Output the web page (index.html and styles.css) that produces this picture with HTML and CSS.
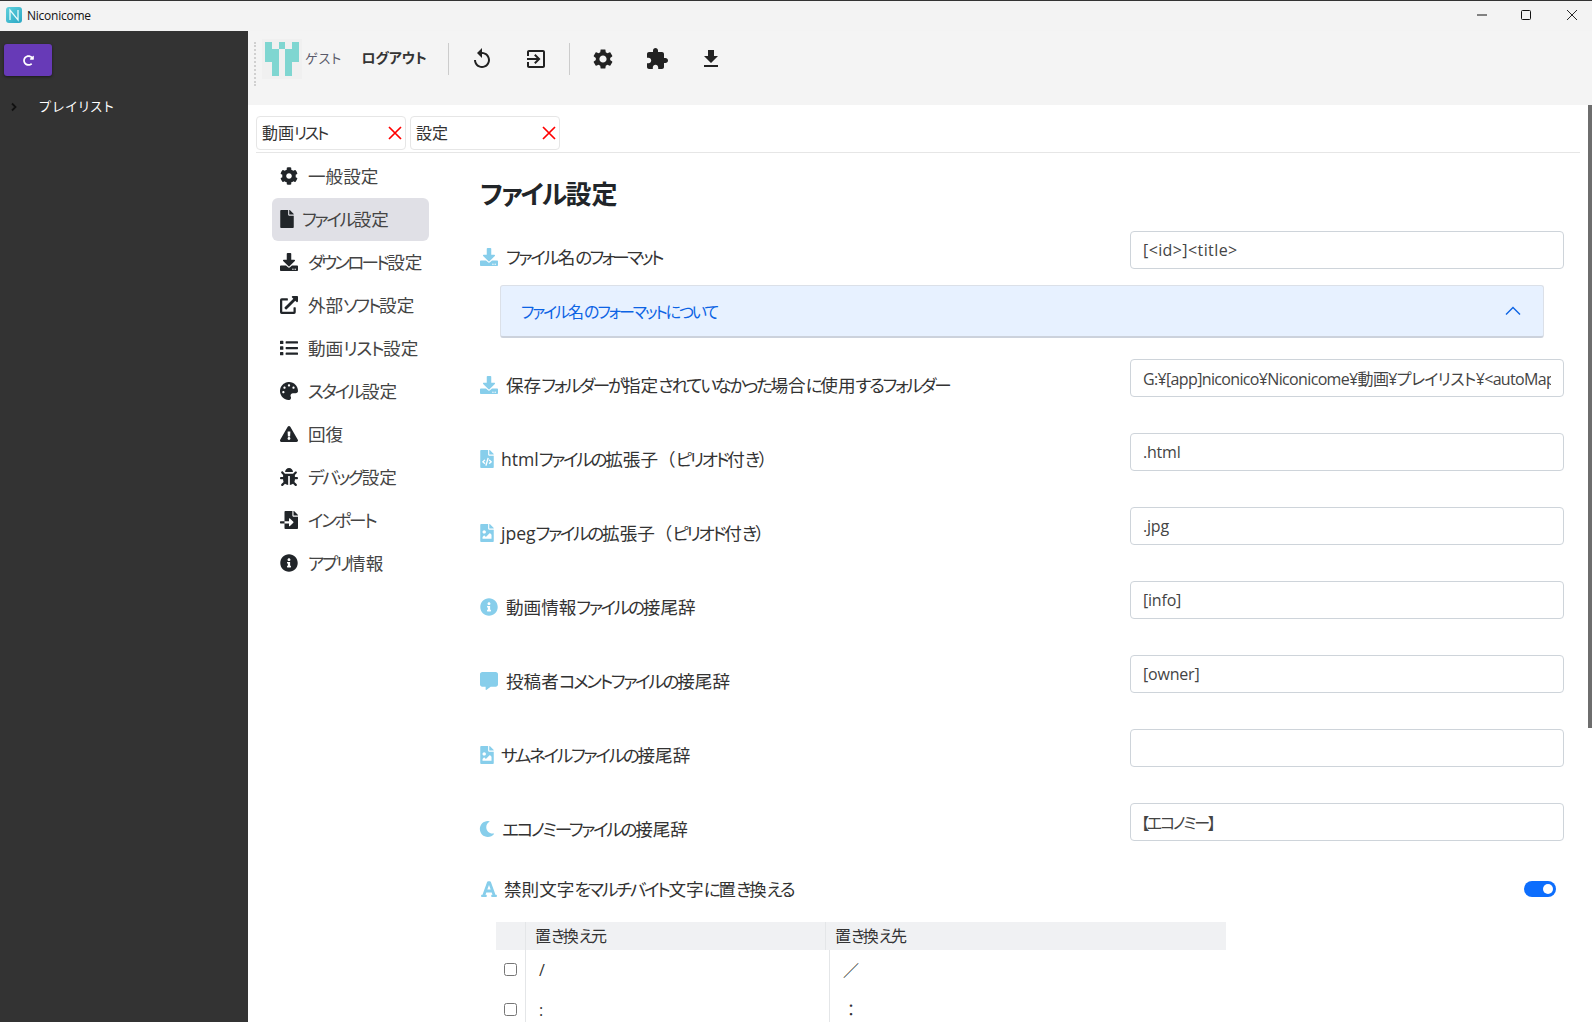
FILE: index.html
```html
<!DOCTYPE html>
<html lang="ja">
<head>
<meta charset="utf-8">
<title>Niconicome</title>
<link rel="stylesheet" href="styles.css">
</head>
<body>
<svg class="defs" aria-hidden="true">
  <symbol id="i-cog" viewBox="0 0 512 512"><path d="M487.4 315.7l-42.6-24.6c4.3-23.2 4.3-47 0-70.2l42.6-24.6c4.9-2.8 7.1-8.6 5.5-14-11.1-35.6-30-67.8-54.7-94.6-3.8-4.1-10-5.1-14.8-2.3L380.8 110c-17.9-15.4-38.5-27.3-60.8-35.1V25.8c0-5.6-3.9-10.5-9.4-11.7-36.7-8.2-74.3-7.8-109.2 0-5.5 1.2-9.4 6.1-9.4 11.7V75c-22.2 7.9-42.8 19.8-60.8 35.1L88.7 85.5c-4.9-2.8-11-1.9-14.8 2.3-24.7 26.7-43.6 58.9-54.7 94.6-1.7 5.4.6 11.2 5.5 14L67.3 221c-4.3 23.2-4.3 47 0 70.2l-42.6 24.6c-4.9 2.8-7.1 8.6-5.5 14 11.1 35.6 30 67.8 54.7 94.6 3.8 4.1 10 5.1 14.8 2.3l42.6-24.6c17.9 15.4 38.5 27.3 60.8 35.1v49.2c0 5.6 3.9 10.5 9.4 11.7 36.7 8.2 74.3 7.8 109.2 0 5.5-1.2 9.4-6.1 9.4-11.7v-49.2c22.2-7.9 42.8-19.8 60.8-35.1l42.6 24.6c4.9 2.8 11 1.9 14.8-2.3 24.7-26.7 43.6-58.9 54.7-94.6 1.5-5.5-.7-11.3-5.6-14.1zM256 336c-44.1 0-80-35.9-80-80s35.9-80 80-80 80 35.9 80 80-35.9 80-80 80z"/></symbol>
  <symbol id="i-download" viewBox="0 0 512 512"><path d="M216 0h80c13.3 0 24 10.7 24 24v168h87.7c17.8 0 26.7 21.5 14.1 34.1L269.7 378.3c-7.5 7.5-19.8 7.5-27.3 0L90.1 226.1c-12.6-12.6-3.7-34.1 14.1-34.1H192V24c0-13.3 10.7-24 24-24zm296 376v112c0 13.3-10.7 24-24 24H24c-13.3 0-24-10.7-24-24V376c0-13.3 10.7-24 24-24h146.7l49 49c20.1 20.1 52.5 20.1 72.6 0l49-49H488c13.3 0 24 10.7 24 24zm-124 88c0-11-9-20-20-20s-20 9-20 20 9 20 20 20 20-9 20-20zm64 0c0-11-9-20-20-20s-20 9-20 20 9 20 20 20 20-9 20-20z"/></symbol>
  <symbol id="i-file" viewBox="0 0 384 512"><path d="M224 136V0H24C10.7 0 0 10.7 0 24v464c0 13.3 10.7 24 24 24h336c13.3 0 24-10.7 24-24V160H248c-13.2 0-24-10.8-24-24zm160-14.1v6.1H256V0h6.1c6.4 0 12.5 2.5 17 7l97.9 98c4.5 4.5 7 10.6 7 16.9z"/></symbol>
  <symbol id="i-info" viewBox="0 0 512 512"><path d="M256 8C119 8 8 119.1 8 256c0 137 111 248 248 248s248-111 248-248C504 119.1 393 8 256 8zm0 110c23.2 0 42 18.8 42 42s-18.8 42-42 42-42-18.8-42-42 18.8-42 42-42zm56 254c0 6.6-5.4 12-12 12h-88c-6.6 0-12-5.4-12-12v-24c0-6.6 5.4-12 12-12h12v-64h-12c-6.6 0-12-5.4-12-12v-24c0-6.6 5.4-12 12-12h64c6.6 0 12 5.4 12 12v100h12c6.6 0 12 5.4 12 12v24z"/></symbol>
  <symbol id="i-warn" viewBox="0 0 576 512"><path d="M569.5 440C588 472 564.8 512 527.9 512H48.1c-36.9 0-60-40-41.6-72L246.4 24c18.5-32 64.7-32 83.2 0l239.9 416zM288 354c-25.4 0-46 20.6-46 46s20.6 46 46 46 46-20.6 46-46-20.6-46-46-46zm-43.7-165.3l7.4 136c.3 6.4 5.6 11.3 12 11.3h48.5c6.4 0 11.6-5 12-11.3l7.4-136c.4-6.9-5.1-12.7-12-12.7h-63.4c-6.9 0-12.4 5.8-12 12.7z"/></symbol>
  <symbol id="i-palette" viewBox="0 0 512 512"><path d="M204.3 5C104.9 24.4 24.8 104.3 5.2 203.4c-37 187 131.7 326.4 258.8 306.7 41.2-6.4 61.4-54.6 42.5-91.7-23.1-45.4 9.9-98.4 60.9-98.4h79.7c35.8 0 64.8-29.6 64.9-65.3C511.5 97.1 368.1-26.9 204.3 5zM96 320c-17.7 0-32-14.3-32-32s14.3-32 32-32 32 14.3 32 32-14.3 32-32 32zm32-128c-17.7 0-32-14.3-32-32s14.3-32 32-32 32 14.3 32 32-14.3 32-32 32zm128-64c-17.7 0-32-14.3-32-32s14.3-32 32-32 32 14.3 32 32-14.3 32-32 32zm128 64c-17.7 0-32-14.3-32-32s14.3-32 32-32 32 14.3 32 32-14.3 32-32 32z"/></symbol>
  <symbol id="i-list" viewBox="0 0 512 512"><path d="M80 368H16a16 16 0 0 0-16 16v64a16 16 0 0 0 16 16h64a16 16 0 0 0 16-16v-64a16 16 0 0 0-16-16zm0-320H16A16 16 0 0 0 0 64v64a16 16 0 0 0 16 16h64a16 16 0 0 0 16-16V64a16 16 0 0 0-16-16zm0 160H16a16 16 0 0 0-16 16v64a16 16 0 0 0 16 16h64a16 16 0 0 0 16-16v-64a16 16 0 0 0-16-16zm416 176H176a16 16 0 0 0-16 16v32a16 16 0 0 0 16 16h320a16 16 0 0 0 16-16v-32a16 16 0 0 0-16-16zm0-320H176a16 16 0 0 0-16 16v32a16 16 0 0 0 16 16h320a16 16 0 0 0 16-16V80a16 16 0 0 0-16-16zm0 160H176a16 16 0 0 0-16 16v32a16 16 0 0 0 16 16h320a16 16 0 0 0 16-16v-32a16 16 0 0 0-16-16z"/></symbol>
  <symbol id="i-external" viewBox="0 0 512 512"><path d="M432 320H400a16 16 0 0 0-16 16V448H64V128H208a16 16 0 0 0 16-16V80a16 16 0 0 0-16-16H48A48 48 0 0 0 0 112V464a48 48 0 0 0 48 48H400a48 48 0 0 0 48-48V336A16 16 0 0 0 432 320ZM488 0h-128c-21.37 0-32.05 25.91-17 41l35.73 35.73L135 320.37a24 24 0 0 0 0 34L157.67 377a24 24 0 0 0 34 0L435.28 133.32 471 169c15 15 41 4.5 41-17V24A24 24 0 0 0 488 0Z"/></symbol>
  <symbol id="i-bug" viewBox="0 0 512 512"><path d="M511.988 288.9c-.478 17.43-15.217 31.1-32.653 31.1H424v16c0 21.864-4.882 42.584-13.6 61.145l60.228 60.228c12.496 12.497 12.496 32.758 0 45.255-12.498 12.497-32.759 12.496-45.256 0l-54.736-54.736C345.886 467.965 314.351 480 280 480V236c0-6.627-5.373-12-12-12h-24c-6.627 0-12 5.373-12 12v244c-34.351 0-65.886-12.035-90.636-32.108l-54.736 54.736c-12.498 12.497-32.759 12.496-45.256 0-12.496-12.497-12.496-32.758 0-45.255l60.228-60.228C92.882 378.584 88 357.864 88 336v-16H32.666C15.23 320 .491 306.33.013 288.9-.484 270.816 14.028 256 32 256h56v-58.745l-46.628-46.628c-12.496-12.497-12.496-32.758 0-45.255 12.498-12.497 32.758-12.497 45.256 0L141.255 160h229.489l54.627-54.627c12.498-12.497 32.758-12.497 45.256 0 12.496 12.497 12.496 32.758 0 45.255L424 197.255V256h56c17.972 0 32.484 14.816 31.988 32.9zM257 0c-61.856 0-112 50.144-112 112h224C369 50.144 318.856 0 257 0z"/></symbol>
  <symbol id="i-import" viewBox="0 0 512 512"><path d="M16 288c-8.8 0-16 7.2-16 16v32c0 8.8 7.2 16 16 16h112v-64zm489-183L407.1 7c-4.5-4.5-10.6-7-17-7H384v128h128v-6.1c0-6.3-2.5-12.4-7-16.9zm-153 31V0H152c-13.3 0-24 10.7-24 24v264h128v-65.2c0-14.3 17.3-21.4 27.4-11.3L379 308c6.6 6.7 6.6 17.4 0 24l-95.7 96.4c-10.1 10.1-27.4 3-27.4-11.3V352H128v136c0 13.3 10.7 24 24 24h336c13.3 0 24-10.7 24-24V160H376c-13.2 0-24-10.8-24-24z"/></symbol>
  <symbol id="i-fileimg" viewBox="0 0 384 512"><path d="M384 121.941V128H256V0h6.059a24 24 0 0 1 16.97 7.029l97.941 97.941a24.002 24.002 0 0 1 7.03 16.971zM248 160c-13.2 0-24-10.8-24-24V0H24C10.745 0 0 10.745 0 24v464c0 13.255 10.745 24 24 24h336c13.255 0 24-10.745 24-24V160H248zm-135.455 16c26.51 0 48 21.49 48 48s-21.49 48-48 48-48-21.49-48-48 21.491-48 48-48zm208 240h-256l.485-48.485L104.545 328c4.686-4.686 11.799-4.201 16.485.485L160.545 368 264.06 264.485c4.686-4.686 12.284-4.686 16.971 0L320.545 304v112z"/></symbol>
  <symbol id="i-filecode" viewBox="0 0 384 512"><path d="M384 121.941V128H256V0h6.059c6.365 0 12.47 2.529 16.971 7.029l97.941 97.941A24.005 24.005 0 0 1 384 121.941zM248 160c-13.2 0-24-10.8-24-24V0H24C10.745 0 0 10.745 0 24v464c0 13.255 10.745 24 24 24h336c13.255 0 24-10.745 24-24V160H248zM123.206 400.505a5.4 5.4 0 0 1-7.633.246l-64.866-60.812a5.4 5.4 0 0 1 0-7.879l64.866-60.812a5.4 5.4 0 0 1 7.633.246l19.579 20.885a5.4 5.4 0 0 1-.372 7.747L101.65 336l40.763 35.874a5.4 5.4 0 0 1 .372 7.747l-19.579 20.884zm51.295 50.479l-27.453-7.97a5.402 5.402 0 0 1-3.681-6.692l61.44-211.626a5.402 5.402 0 0 1 6.692-3.681l27.452 7.97a5.4 5.4 0 0 1 3.68 6.692l-61.44 211.626a5.397 5.397 0 0 1-6.69 3.681zm160.792-111.045l-64.866 60.812a5.4 5.4 0 0 1-7.633-.246l-19.58-20.885a5.4 5.4 0 0 1 .372-7.747L284.35 336l-40.763-35.874a5.4 5.4 0 0 1-.372-7.747l19.58-20.885a5.4 5.4 0 0 1 7.633-.246l64.866 60.812a5.4 5.4 0 0 1-.001 7.879z"/></symbol>
  <symbol id="i-comment" viewBox="0 0 512 512"><path d="M448 0H64C28.7 0 0 28.7 0 64v288c0 35.3 28.7 64 64 64h96v84c0 9.8 11.2 15.5 19.1 9.7L304 416h144c35.3 0 64-28.7 64-64V64c0-35.3-28.7-64-64-64z"/></symbol>
  <symbol id="i-moon" viewBox="0 0 512 512"><path d="M283.211 512c78.962 0 151.079-35.925 198.857-94.792 7.068-8.708-.639-21.43-11.562-19.35-124.203 23.654-238.262-71.576-238.262-196.954 0-72.222 38.662-138.635 101.498-174.394 9.686-5.512 7.25-20.197-3.756-22.23A258.156 258.156 0 0 0 283.211 0c-141.309 0-256 114.511-256 256 0 141.309 114.511 256 256 256z"/></symbol>
  <symbol id="i-font" viewBox="0 0 448 512"><path d="M432 416h-23.41L277.88 53.69A32 32 0 0 0 247.58 32h-47.16a32 32 0 0 0-30.3 21.69L39.41 416H16a16 16 0 0 0-16 16v32a16 16 0 0 0 16 16h128a16 16 0 0 0 16-16v-32a16 16 0 0 0-16-16h-19.6l23.3-64h152.6l23.3 64H304a16 16 0 0 0-16 16v32a16 16 0 0 0 16 16h128a16 16 0 0 0 16-16v-32a16 16 0 0 0-16-16zM176.85 272L224 142.51 271.15 272z"/></symbol>
  <symbol id="i-redo" viewBox="0 0 512 512"><path d="M256.455 8c66.269.119 126.437 26.233 170.859 68.685l35.715-35.715C478.149 25.851 504 36.559 504 57.941V192c0 13.255-10.745 24-24 24H345.941c-21.382 0-32.09-25.851-16.971-40.971l41.75-41.75c-30.864-28.899-70.801-44.907-113.23-45.273-92.398-.798-170.283 73.977-169.484 169.442C88.764 348.009 162.184 424 256 424c41.127 0 79.997-14.678 110.629-41.556 4.743-4.161 11.906-3.908 16.368.553l39.662 39.662c4.872 4.872 4.631 12.815-.482 17.433C378.202 479.813 319.926 504 256 504 119.034 504 8.001 392.967 8 256.002 7.999 119.193 119.646 7.755 256.455 8z"/></symbol>
  <symbol id="m-replay" viewBox="0 0 24 24"><path d="M12 5V1L7 6l5 5V7c3.31 0 6 2.69 6 6s-2.69 6-6 6-6-2.69-6-6H4c0 4.42 3.58 8 8 8s8-3.58 8-8-3.58-8-8-8z"/></symbol>
  <symbol id="m-exit" viewBox="0 0 24 24"><path d="M10.09 15.59L11.5 17l5-5-5-5-1.41 1.41L12.67 11H3v2h9.67l-2.58 2.59zM19 3H5c-1.11 0-2 .9-2 2v4h2V5h14v14H5v-4H3v4c0 1.1.89 2 2 2h14c1.1 0 2-.9 2-2V5c0-1.1-.9-2-2-2z"/></symbol>
  <symbol id="m-settings" viewBox="0 0 24 24"><path d="M19.14 12.94c.04-.3.06-.61.06-.94 0-.32-.02-.64-.07-.94l2.03-1.58c.18-.14.23-.41.12-.61l-1.92-3.32c-.12-.22-.37-.29-.59-.22l-2.39.96c-.5-.38-1.03-.7-1.62-.94l-.36-2.54c-.04-.24-.24-.41-.48-.41h-3.84c-.24 0-.43.17-.47.41l-.36 2.54c-.59.24-1.13.57-1.62.94l-2.39-.96c-.22-.08-.47 0-.59.22L2.74 8.87c-.12.21-.08.47.12.61l2.03 1.58c-.05.3-.09.63-.09.94s.02.64.07.94l-2.03 1.58c-.18.14-.23.41-.12.61l1.92 3.32c.12.22.37.29.59.22l2.39-.96c.5.38 1.03.7 1.62.94l.36 2.54c.05.24.24.41.48.41h3.84c.24 0 .44-.17.47-.41l.36-2.54c.59-.24 1.13-.56 1.62-.94l2.39.96c.22.08.47 0 .59-.22l1.92-3.32c.12-.22.07-.47-.12-.61l-2.01-1.58zM12 15.6c-1.98 0-3.6-1.62-3.6-3.6s1.62-3.6 3.6-3.6 3.6 1.62 3.6 3.6-1.62 3.6-3.6 3.6z"/></symbol>
  <symbol id="m-extension" viewBox="0 0 24 24"><path d="M20.5 11H19V7c0-1.1-.9-2-2-2h-4V3.5C13 2.12 11.88 1 10.5 1S8 2.12 8 3.5V5H4c-1.1 0-1.99.9-1.99 2v3.8H3.5c1.49 0 2.7 1.21 2.7 2.7s-1.21 2.7-2.7 2.7H2V20c0 1.1.9 2 2 2h3.8v-1.5c0-1.49 1.21-2.7 2.7-2.7 1.49 0 2.7 1.21 2.7 2.7V22H17c1.1 0 2-.9 2-2v-4h1.5c1.38 0 2.5-1.12 2.5-2.5S21.88 11 20.5 11z"/></symbol>
  <symbol id="m-download" viewBox="0 0 24 24"><path d="M19 9h-4V3H9v6H5l7 7 7-7zM5 18v2h14v-2H5z"/></symbol>
  <symbol id="i-x" viewBox="0 0 14 14"><path d="M1 1l12 12M13 1L1 13" fill="none" stroke="currentColor" stroke-width="1.7"/></symbol>
</svg>

<div class="app">
  <header class="titlebar">
    <svg class="logo" viewBox="0 0 16 16">
      <defs><linearGradient id="lg" x1="0" y1="0" x2="1" y2="1"><stop offset="0" stop-color="#5fd0dc"/><stop offset="1" stop-color="#2aa7c4"/></linearGradient></defs>
      <rect width="16" height="16" rx="3" fill="url(#lg)"/>
      <path d="M4 13V3l8 10V3" fill="none" stroke="#e8fbfb" stroke-width="1.3"/>
    </svg>
    <span class="app-name">Niconicome</span>
    <div class="win-controls">
      <svg viewBox="0 0 10 10"><path d="M0 5h10" stroke="#111" fill="none"/></svg>
      <svg viewBox="0 0 10 10"><rect x=".5" y=".5" width="9" height="9" rx="1" stroke="#111" fill="none"/></svg>
      <svg viewBox="0 0 10 10"><path d="M0 0l10 10M10 0L0 10" stroke="#111" stroke-width=".9" fill="none"/></svg>
    </div>
  </header>

  <div class="body">
    <aside class="sidebar">
      <button class="sync-btn"><svg class="ico"><use href="#i-redo"/></svg></button>
      <div class="tree-item">
        <svg class="chev" viewBox="0 0 8 10"><path d="M2 1.5L5.5 5 2 8.5" fill="none" stroke="#111" stroke-width="1.8"/></svg>
        <span class="tree-label">プレイリスト</span>
      </div>
    </aside>

    <div class="main">
      <nav class="toolbar">
        <span class="grip"></span>
        <div class="avatar">
          <svg viewBox="0 0 5 5" shape-rendering="crispEdges"><path d="M0 0h1v1H0zM2 0h1v1H2zM4 0h1v1H4zM0 1h2v2H0zM3 1h2v2H3zM1 3h1v2H1zM3 3h1v2H3z" fill="#7fd6d1"/></svg>
        </div>
        <span class="guest">ゲスト</span>
        <span class="logout">ログアウト</span>
        <span class="tool-sep"></span>
        <svg class="tool-ico"><use href="#m-replay"/></svg>
        <svg class="tool-ico"><use href="#m-exit"/></svg>
        <span class="tool-sep"></span>
        <svg class="tool-ico"><use href="#m-settings"/></svg>
        <svg class="tool-ico"><use href="#m-extension"/></svg>
        <svg class="tool-ico"><use href="#m-download"/></svg>
      </nav>

      <section class="content">
        <div class="tabs">
          <div class="tab"><span>動画<span class="k">リスト</span></span><svg class="tab-x"><use href="#i-x"/></svg></div>
          <div class="tab"><span>設定</span><svg class="tab-x"><use href="#i-x"/></svg></div>
        </div>

        <div class="settings">
          <ul class="side-nav">
            <li><svg class="ico"><use href="#i-cog"/></svg><span>一般設定</span></li>
            <li class="active"><svg class="ico narrow"><use href="#i-file"/></svg><span><span class="k">ファイル</span>設定</span></li>
            <li><svg class="ico"><use href="#i-download"/></svg><span><span class="k tight">ダウンロード</span>設定</span></li>
            <li><svg class="ico"><use href="#i-external"/></svg><span>外部<span class="k">ソフト</span>設定</span></li>
            <li><svg class="ico"><use href="#i-list"/></svg><span>動画<span class="k loose">リスト</span>設定</span></li>
            <li><svg class="ico"><use href="#i-palette"/></svg><span><span class="k">スタイル</span>設定</span></li>
            <li><svg class="ico"><use href="#i-warn"/></svg><span>回復</span></li>
            <li><svg class="ico"><use href="#i-bug"/></svg><span><span class="k">デバッグ</span>設定</span></li>
            <li><svg class="ico"><use href="#i-import"/></svg><span><span class="k">インポート</span></span></li>
            <li><svg class="ico"><use href="#i-info"/></svg><span><span class="k">アプリ</span>情報</span></li>
          </ul>

          <div class="pane">
            <h1 class="pane-title"><span class="k">ファイル</span>設定</h1>

            <div class="row first">
              <label class="label"><svg class="ico"><use href="#i-download"/></svg><span><span class="k">ファイル</span>名<span class="k tight">のフォーマット</span></span></label>
              <input class="input wide" value="[&lt;id&gt;]&lt;title&gt;">
            </div>
            <div class="accordion">
              <span><span class="k">ファイル</span>名<span class="k">のフォーマットについて</span></span>
              <svg viewBox="0 0 16 16"><path d="M1 11.5L8 4.5l7 7" fill="none" stroke="#0c63e4" stroke-width="1.4"/></svg>
            </div>
            <div class="row">
              <label class="label"><svg class="ico"><use href="#i-download"/></svg><span>保存<span class="k">フォルダーが</span>指定<span class="k">されていなかった</span>場合<span class="k">に</span>使用<span class="k">するフォルダー</span></span></label>
              <input class="input path" value="G:¥[app]niconico¥Niconicome¥動画¥プレイリスト¥&lt;autoMap&gt;¥&lt;title&gt;">
            </div>
            <div class="row">
              <label class="label"><svg class="ico narrow"><use href="#i-filecode"/></svg><span>html<span class="k">ファイルの</span>拡張子<span class="fw">（</span><span class="k">ピリオド</span>付<span class="k">き</span><span class="fw">）</span></span></label>
              <input class="input" value=".html">
            </div>
            <div class="row">
              <label class="label"><svg class="ico narrow"><use href="#i-fileimg"/></svg><span>jpeg<span class="k">ファイルの</span>拡張子<span class="fw">（</span><span class="k">ピリオド</span>付<span class="k">き</span><span class="fw">）</span></span></label>
              <input class="input" value=".jpg">
            </div>
            <div class="row">
              <label class="label"><svg class="ico"><use href="#i-info"/></svg><span>動画情報<span class="k">ファイルの</span>接尾辞</span></label>
              <input class="input" value="[info]">
            </div>
            <div class="row">
              <label class="label"><svg class="ico"><use href="#i-comment"/></svg><span>投稿者<span class="k">コメントファイルの</span>接尾辞</span></label>
              <input class="input" value="[owner]">
            </div>
            <div class="row">
              <label class="label"><svg class="ico narrow"><use href="#i-fileimg"/></svg><span><span class="k">サムネイルファイルの</span>接尾辞</span></label>
              <input class="input" value="">
            </div>
            <div class="row">
              <label class="label"><svg class="ico moon"><use href="#i-moon"/></svg><span><span class="k">エコノミーファイルの</span>接尾辞</span></label>
              <input class="input eco" value="【エコノミー】">
            </div>
            <div class="toggle-row">
              <label class="label"><svg class="ico font"><use href="#i-font"/></svg><span>禁則文字<span class="k">をマルチバイト</span>文字<span class="k">に</span>置<span class="k">き</span>換<span class="k">える</span></span></label>
              <span class="toggle"></span>
            </div>

            <div class="rep-table">
              <div class="rep-head">
                <div></div>
                <div>置<span class="k">き</span>換<span class="k">え</span>元</div>
                <div>置<span class="k">き</span>換<span class="k">え</span>先</div>
              </div>
              <div class="rep-row">
                <div><input type="checkbox"></div><div>/</div><div class="fw">／</div>
              </div>
              <div class="rep-row">
                <div><input type="checkbox"></div><div>:</div><div class="fw">：</div>
              </div>
            </div>
          </div>
        </div>
        <span class="scroll-thumb"></span>
      </section>
    </div>
  </div>
</div>
</body>
</html>
```
FILE: styles.css
```css
* { box-sizing: border-box; }
html, body { margin: 0; height: 100%; overflow: hidden; }
body {
  font-family: "Open Sans", "Noto Sans CJK JP", sans-serif;
  font-feature-settings: "palt";
  color: #212529;
  background: #fff;
}
.defs { position: absolute; width: 0; height: 0; }
.app { display: flex; flex-direction: column; height: 1022px; }

/* kana in the reference's UI font run narrower than in Noto */
.k { letter-spacing: -2.3px; }
.k.tight { letter-spacing: -2.8px; }
.k.loose { letter-spacing: -1.3px; }
.fw { font-feature-settings: normal; }

.titlebar {
  flex: 0 0 31px;
  display: flex;
  align-items: center;
  background: #f3f3f3;
  border-top: 1px solid #333;
  padding: 0 0 2px 6px;
}
.logo { width: 16px; height: 16px; margin-right: 5px; }
.app-name { font-size: 12px; color: #111; letter-spacing: -.25px; }
.win-controls { margin-left: auto; display: flex; align-items: center; gap: 35px; padding-right: 15px; }
.win-controls svg { width: 10px; height: 10px; display: block; }
.win-controls svg:first-child { margin-right: -1px; }
.win-controls svg:last-child { margin-left: 1px; }

.body { flex: 1; display: flex; min-height: 0; }
.sidebar { flex: 0 0 248px; background: #333; }
.sync-btn {
  display: flex; align-items: center; justify-content: center;
  width: 48px; height: 32px; margin: 13px 0 0 4px;
  background: #673ab7; border: 0; border-radius: 3px;
  box-shadow: 0 1px 3px rgba(0,0,0,.5);
  color: #fff; padding: 0;
}
.sync-btn .ico { width: 11px; height: 11px; fill: #fff; margin: 0; }
.tree-item {
  display: flex; align-items: center;
  margin-top: 21px; height: 20px; padding-left: 10px;
  font-size: 13px; letter-spacing: 1.5px; color: #fff;
}
.tree-label { padding-bottom: 3px; }
.chev { width: 8px; height: 10px; margin-right: 21px; }

.main { flex: 1; min-width: 0; display: flex; flex-direction: column; }
.toolbar {
  flex: 0 0 74px;
  display: flex; align-items: flex-start;
  background: #f4f4f4;
  padding: 8px 0 0 6px;
}
.grip { width: 0; height: 44px; margin-top: 3px; border-left: 2px dotted #d0d0d0; }
.avatar { width: 40px; height: 40px; margin-left: 6px; background: #f0f0f0; padding: 3px; }
.avatar svg { display: block; width: 34px; height: 34px; }
.guest { font-size: 13px; color: #5a5a6a; line-height: 38px; margin-left: 3px; letter-spacing: 1px; }
.logout { font-size: 14px; font-weight: 700; color: #333; line-height: 38px; margin-left: 19px; }
.tool-sep { width: 1px; height: 32px; background: #ccc; margin: 4px 21px 0 21px; }
.tool-ico { width: 24px; height: 24px; margin: 8px 30px 0 0; fill: #222; }
.tool-ico + .tool-sep { margin-left: -9px; }

.content { flex: 1; position: relative; min-height: 0; overflow: hidden; padding-left: 8px; }
.tabs {
  display: flex; gap: 4px;
  margin-top: 11px; margin-right: 12px; padding-bottom: 2px;
  border-bottom: 1px solid #e6e6e6;
}
.tab {
  width: 150px; height: 34px;
  display: flex; align-items: center; justify-content: space-between;
  padding: 0 3px 2px 5px;
  border: 1px solid #e6e6e6; border-radius: 4px;
  font-size: 16px; color: #333;
}
.tab-x { width: 14px; height: 14px; color: #f00; margin-top: 2px; }

.settings { display: flex; }
.side-nav {
  list-style: none; margin: 2px 0 0 16px; padding: 0;
  flex: 0 0 157px;
}
.side-nav li {
  height: 43px;
  display: flex; align-items: center;
  padding: 0 0 2px 8px;
  font-size: 17.6px; color: #444;
  white-space: nowrap;
  border-radius: 6px;
}
.side-nav .ico { margin-right: 10px; }
.side-nav .active { background: #e0e0e6; }
.side-nav .active .ico { margin-right: 8px; }
.ico { width: 18px; height: 18px; fill: #212529; flex: none; }
.ico.narrow { width: 14px; }

.pane { flex: 0 0 1084px; margin-left: 51px; }
.pane-title { margin: 24px 0 0; font-size: 26px; line-height: 34px; font-weight: 700; }
.pane-title .k { letter-spacing: -1.8px; }

.row { display: flex; justify-content: space-between; align-items: flex-start; height: 38px; margin-bottom: 36px; }
.row.first { margin-top: 20px; margin-bottom: 16px; }
.label {
  display: flex; align-items: center;
  padding-top: 13px;
  font-size: 17.6px; line-height: 26px; color: #333;
}
.label .ico { fill: #87ceeb; margin-right: 8px; }
.label .ico.narrow { margin-right: 7px; }
.label .ico.moon { width: 16px; height: 16px; margin: 0 7px 0 -1px; }
.label .ico.font { margin-right: 6px; }
.input {
  flex: 0 0 434px; height: 38px;
  padding: 6px 12px;
  border: 1px solid #ced4da; border-radius: 4px;
  font: inherit; font-size: 16px; color: #444;
  font-feature-settings: "palt";
  letter-spacing: -.2px;
}
.input.wide { letter-spacing: .4px; }
.input.path { letter-spacing: -.65px; }
.input.eco { letter-spacing: -2.2px; padding-left: 10px; }
.accordion {
  height: 53px; margin: 0 20px 21px;
  display: flex; align-items: center; justify-content: space-between;
  padding: 0 22px 0 20px;
  background: #e7f1ff; color: #0c63e4; font-size: 16px;
  border: 1px solid #dbe0e8; border-bottom: 2px solid #ccd2dc; border-radius: 3px;
}
.accordion .k { letter-spacing: -2.1px; }
.accordion svg { width: 16px; height: 16px; }

.toggle-row { display: flex; justify-content: space-between; align-items: center; height: 24px; margin-bottom: 21px; }
.toggle-row .label { padding-top: 0; }
.toggle { position: relative; width: 32px; height: 16px; margin-right: 8px; border-radius: 8px; background: #0d6efd; }
.toggle::after {
  content: ""; position: absolute; right: 3px; top: 3px;
  width: 10px; height: 10px; border-radius: 50%; background: #fff;
}

.rep-table { width: 730px; margin-left: 16px; font-size: 16px; color: #333; }
.rep-head, .rep-row { display: grid; }
.rep-head { grid-template-columns: 29px 300px 1fr; height: 28px; background: #f0f1f3; line-height: 28px; }
.rep-row { grid-template-columns: 29px 304px 1fr; height: 40px; line-height: 40px; }
.rep-head > div + div, .rep-row > div + div { border-left: 1px solid #e4e6e8; padding-left: 9px; }
.rep-row > div + div { padding-left: 13px; }
.rep-row input { display: block; width: 13px; height: 13px; margin: 13px 0 0 8px; }
.scroll-thumb { position: absolute; right: 0; top: 0; width: 4px; height: 623px; background: #6e6e6e; }
```
